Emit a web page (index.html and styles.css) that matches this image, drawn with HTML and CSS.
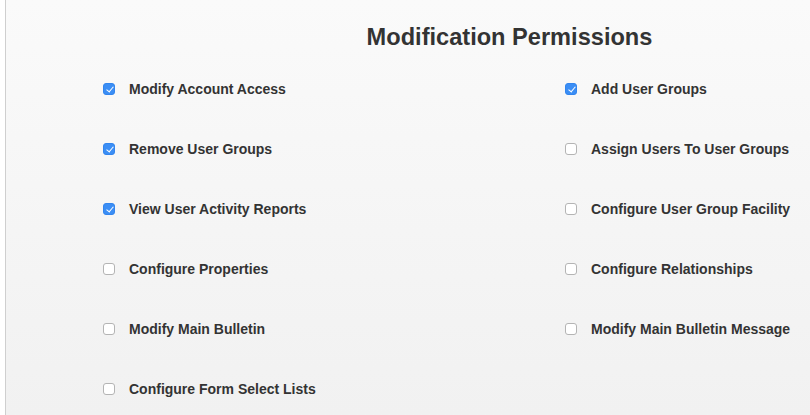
FILE: index.html
```html
<!DOCTYPE html>
<html>
<head>
<meta charset="utf-8">
<link rel="stylesheet" href="styles.css">
</head>
<body>
<div class="page">
  <section class="panel">
    <h1 class="title">Modification Permissions</h1>
    <div class="grid">
      <label class="perm"><span class="box checked"></span><span class="text">Modify Account Access</span></label>
      <label class="perm"><span class="box checked"></span><span class="text">Add User Groups</span></label>
      <label class="perm"><span class="box checked"></span><span class="text">Remove User Groups</span></label>
      <label class="perm"><span class="box"></span><span class="text">Assign Users To User Groups</span></label>
      <label class="perm"><span class="box checked"></span><span class="text">View User Activity Reports</span></label>
      <label class="perm"><span class="box"></span><span class="text">Configure User Group Facility</span></label>
      <label class="perm"><span class="box"></span><span class="text">Configure Properties</span></label>
      <label class="perm"><span class="box"></span><span class="text">Configure Relationships</span></label>
      <label class="perm"><span class="box"></span><span class="text">Modify Main Bulletin</span></label>
      <label class="perm"><span class="box"></span><span class="text">Modify Main Bulletin Message</span></label>
      <label class="perm"><span class="box"></span><span class="text">Configure Form Select Lists</span></label>
    </div>
  </section>
</div>
</body>
</html>
```
FILE: styles.css
```css
html, body {
  margin: 0;
  padding: 0;
  background: #ffffff;
  overflow: hidden;
  height: 100%;
}
.page {
  width: 810px;
  height: 415px;
  overflow: hidden;
  padding-left: 5px;
  box-sizing: border-box;
  background: #ffffff;
}
.panel {
  width: 1008px;
  height: 415px;
  border-left: 1px solid #cfcfcf;
  background: linear-gradient(to bottom, #fafafa 0%, #f1f1f1 100%);
  box-sizing: border-box;
  font-family: "Liberation Sans", Arial, sans-serif;
  color: #333333;
}
.title {
  margin: 0;
  padding-top: 22px;
  text-align: center;
  font-size: 23.6px;
  font-weight: bold;
  line-height: 30px;
  color: #333333;
}
.grid {
  display: grid;
  grid-template-columns: 462px 1fr;
  row-gap: 42px;
  padding-left: 97px;
  padding-top: 28px;
}
.perm {
  display: flex;
  align-items: center;
  height: 18px;
}
.box {
  width: 12px;
  height: 12px;
  box-sizing: border-box;
  border: 1px solid #b4b4b4;
  border-radius: 3px;
  background: #ffffff;
  margin-right: 14px;
  flex: none;
  position: relative;
}
.box.checked {
  background: #3b8ef5;
  border-color: #3285ee;
}
.box.checked::after {
  content: "";
  position: absolute;
  left: 3.5px;
  top: 1px;
  width: 3px;
  height: 6px;
  border: solid #ffffff;
  border-width: 0 1.5px 1.5px 0;
  transform: rotate(40deg);
}
.text {
  font-size: 14px;
  font-weight: bold;
  color: #333333;
}
```
